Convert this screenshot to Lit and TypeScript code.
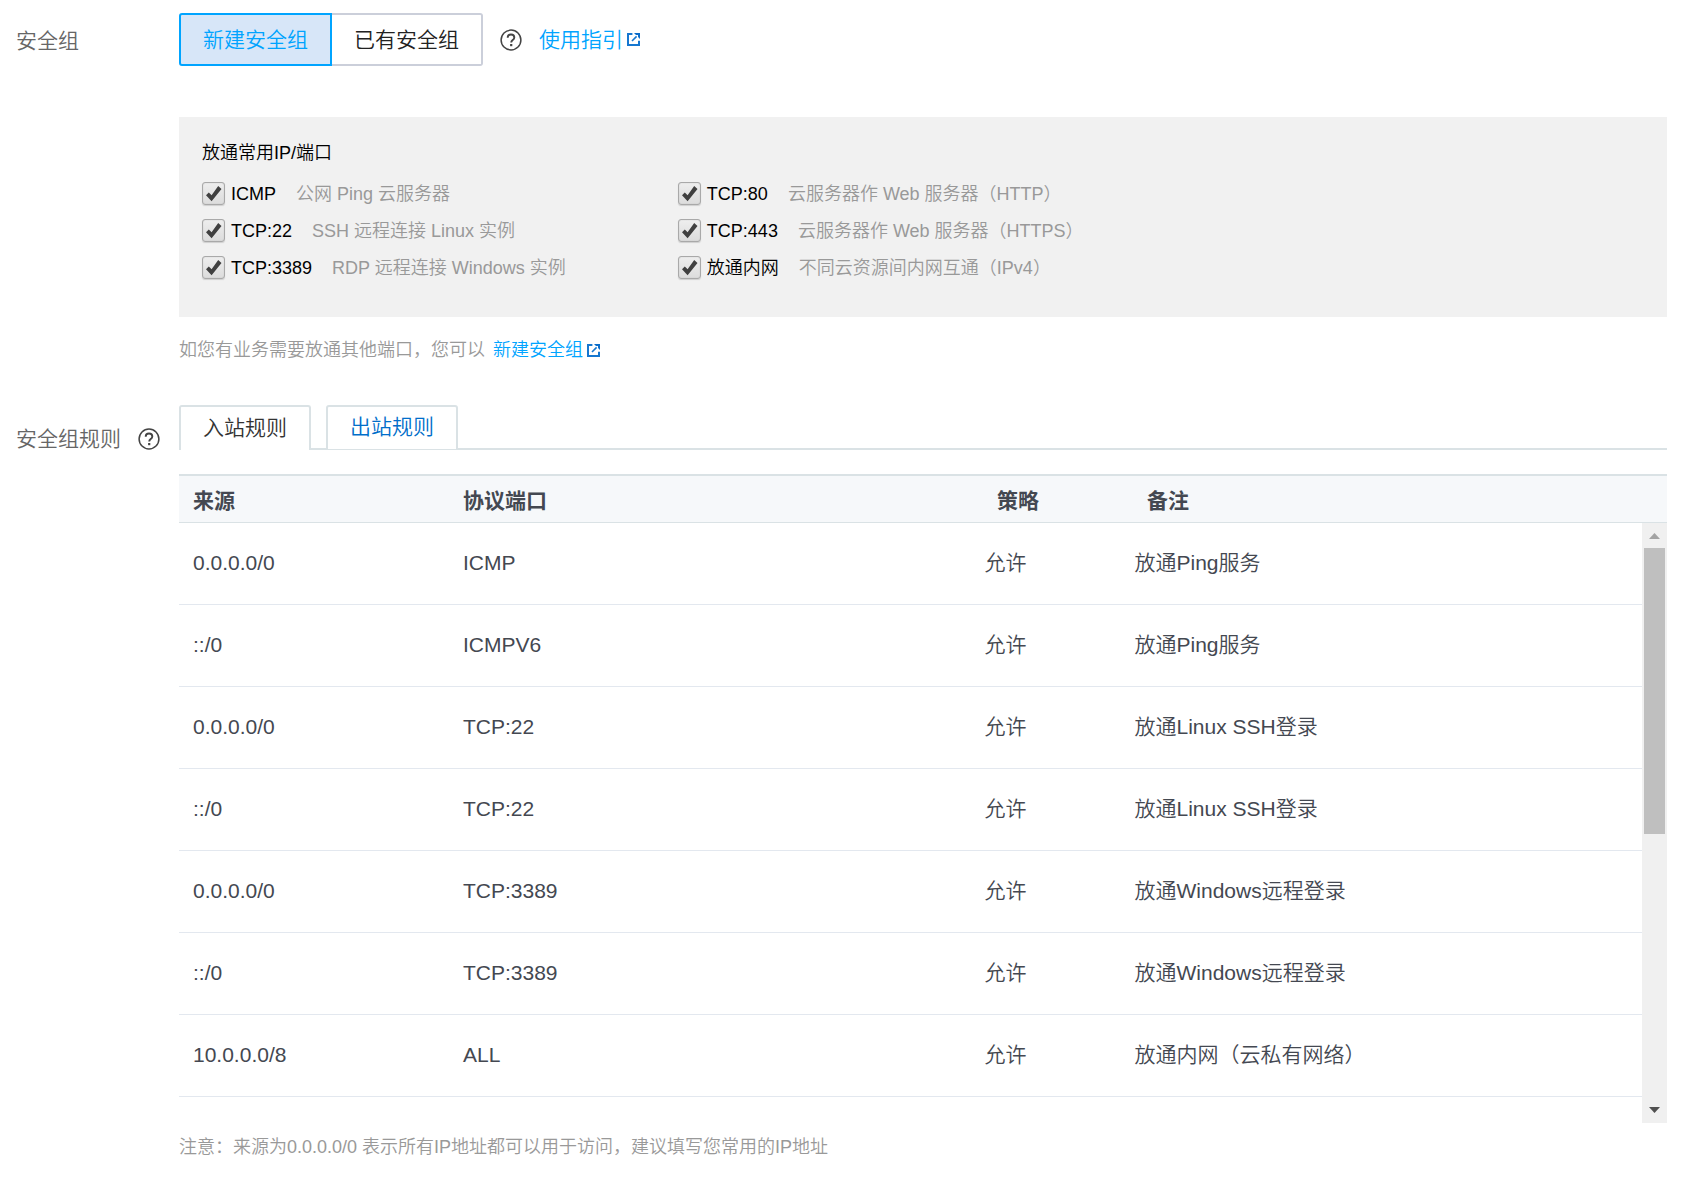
import { LitElement, html, css, svg } from "lit";
import { customElement, state } from "lit/decorators.js";
import { classMap } from "lit/directives/class-map.js";

interface PortOption {
  id: string;
  name: string;
  note: string;
}

interface Rule {
  source: string;
  port: string;
  policy: string;
  remark: string;
}

const PORTS: PortOption[] = [
  { id: "icmp", name: "ICMP", note: "公网 Ping 云服务器" },
  { id: "tcp80", name: "TCP:80", note: "云服务器作 Web 服务器（HTTP）" },
  { id: "tcp22", name: "TCP:22", note: "SSH 远程连接 Linux 实例" },
  { id: "tcp443", name: "TCP:443", note: "云服务器作 Web 服务器（HTTPS）" },
  { id: "tcp3389", name: "TCP:3389", note: "RDP 远程连接 Windows 实例" },
  { id: "intranet", name: "放通内网", note: "不同云资源间内网互通（IPv4）" },
];

const RULES: Rule[] = [
  { source: "0.0.0.0/0", port: "ICMP", policy: "允许", remark: "放通Ping服务" },
  { source: "::/0", port: "ICMPV6", policy: "允许", remark: "放通Ping服务" },
  { source: "0.0.0.0/0", port: "TCP:22", policy: "允许", remark: "放通Linux SSH登录" },
  { source: "::/0", port: "TCP:22", policy: "允许", remark: "放通Linux SSH登录" },
  { source: "0.0.0.0/0", port: "TCP:3389", policy: "允许", remark: "放通Windows远程登录" },
  { source: "::/0", port: "TCP:3389", policy: "允许", remark: "放通Windows远程登录" },
  { source: "10.0.0.0/8", port: "ALL", policy: "允许", remark: "放通内网（云私有网络）" },
];

const MODES = ["新建安全组", "已有安全组"];
const TABS = ["入站规则", "出站规则"];

const helpIcon = html`<svg class="help" viewBox="0 0 22 22" aria-hidden="true">
  ${svg`<circle cx="11" cy="11" r="9.9" fill="none" stroke="#444" stroke-width="1.5"/>
  <path d="M7.7 8.7C7.7 6.6 9.1 5.5 11 5.5s3.3 1.1 3.3 2.9c0 1.3-.7 2-1.6 2.7-.9.7-1.5 1.2-1.5 2.5" fill="none" stroke="#444" stroke-width="1.9"/>
  <rect x="10.1" y="15" width="2.2" height="2.2" fill="#444"/>`}
</svg>`;

const externalIcon = html`<svg class="external" viewBox="0 0 13 13" aria-hidden="true">
  ${svg`<path d="M5.4 1H1v11h11V7.8" fill="none" stroke="#1577d0" stroke-width="2"/>
  <path d="M5 8 9.6 3.4" fill="none" stroke="#1577d0" stroke-width="1.6"/>
  <path d="M7 0H13V6L11 4V2H9z" fill="#0a6cca"/>`}
</svg>`;

@customElement("app-root")
export class AppRoot extends LitElement {
  @state() private mode = 0;
  @state() private tab = 0;

  static styles = css`
    :host {
      display: block;
      padding: 13px 25px 19px 16px;
      background: #fff;
      color: #444;
      font-family: "Liberation Sans", "Noto Sans CJK SC", sans-serif;
      font-weight: 350;
      font-size: 21px;
      line-height: 28px;
    }
    *, *::before, *::after { box-sizing: border-box; }
    button { font: inherit; cursor: pointer; }
    a { color: #00a4ff; text-decoration: none; }

    .field {
      display: grid;
      grid-template-columns: 163px minmax(0, 1fr);
    }
    .field + .field { margin-top: 43px; }
    .caption {
      display: flex;
      align-items: center;
      justify-content: space-between;
      align-self: start;
      padding-right: 19px;
      color: #666;
    }
    .caption.first { margin-top: 14px; }
    .caption.second { margin-top: 20px; }
    .help { width: 22px; height: 22px; display: block; flex: none; }
    .external { width: 13px; height: 13px; flex: none; margin-left: 4px; }
    .link { display: inline-flex; align-items: center; }

    .toolbar { display: flex; align-items: center; gap: 17px; }
    .segments { display: flex; }
    .segment {
      height: 53px;
      padding: 0 22px;
      border: 2px solid #cbcfda;
      border-left: 0;
      border-radius: 0 3px 3px 0;
      background: #fff;
      color: #222;
    }
    .segment:first-child { border-left: 2px solid #cbcfda; border-radius: 3px 0 0 3px; }
    .segment.active,
    .segment.active:first-child { border: 2px solid #00a4ff; background: #d7e6f8; color: #00a4ff; }

    .panel {
      margin: 51px 0 0;
      padding: 24px 23px 31px;
      background: #f1f1f1;
      color: #000;
      font-size: 18px;
      line-height: 24px;
    }
    .panel-title { margin: 0; font-size: 18px; font-weight: 350; }
    .ports {
      display: grid;
      grid-template-columns: 33% 1fr;
      grid-auto-rows: 37px;
      margin-top: 10px;
    }
    .port { display: flex; align-items: center; }
    .port-note { margin-left: 20px; color: #999; }
    .tick { display: grid; width: 23px; height: 23px; margin-right: 6px; }
    .box {
      grid-area: 1 / 1;
      appearance: none;
      width: 23px;
      height: 23px;
      margin: 0;
      border: 1px solid #a9a9a9;
      border-radius: 3px;
      background: linear-gradient(#eeeeee, #dcdcdc);
      box-shadow: 0 1px 1px #cfcfcf, inset 0 0 1px #a9a9a9;
    }
    .mark { grid-area: 1 / 1; width: 23px; height: 23px; pointer-events: none; visibility: hidden; }
    .box:checked + .mark { visibility: visible; }

    .hint {
      display: flex;
      gap: 8px;
      margin: 21px 0 0;
      font-size: 18px;
      line-height: 24px;
      color: #999;
    }

    .tabs { display: flex; height: 45px; }
    .tab {
      padding: 0 22px 2px;
      border: 2px solid #dae2e5;
      border-bottom: 1px solid #dae2e5;
      border-radius: 3px 3px 0 0;
      background: #fff;
      color: #006eca;
    }
    .tab.active { border-bottom: 0; color: #333; }
    .spacer { width: 15px; border-bottom: 2px solid #dae2e5; }
    .filler { flex: 1; border-bottom: 2px solid #dae2e5; }

    .head, .rows { width: 100%; table-layout: fixed; border-collapse: separate; border-spacing: 0; }
    .head { margin-top: 24px; background: #f6f8fa; }
    .head th {
      height: 49px;
      padding: 3px 14px 0;
      border-top: 2px solid #dae2e5;
      border-bottom: 1px solid #dae2e5;
      text-align: left;
      font-weight: 700;
      color: #444851;
    }
    .col-source { width: 270px; }
    .col-policy { width: 150px; }
    .viewport { display: grid; grid-template-columns: minmax(0, 1fr) 25px; }
    .scroll { padding-bottom: 26px; }
    .rows td {
      height: 82px;
      padding: 0 14px 2px;
      border-bottom: 1px solid #e3e8ef;
      color: #444851;
    }
    .bar {
      display: grid;
      grid-template-rows: 25px minmax(0, 1fr) 25px;
      background: #f0f0f0;
    }
    .thumb { height: 52%; margin: 0 2px; background: #bfbfbf; }
    .arrow { width: 25px; height: 25px; display: block; }
    .notice { margin: 12px 0 0; font-size: 18px; line-height: 24px; color: #999; }
  `;

  private renderPort(port: PortOption) {
    return html`<label class="port" for=${port.id}>
      <span class="tick">
        <input class="box" type="checkbox" id=${port.id} checked />
        <svg class="mark" viewBox="0 0 23 23" aria-hidden="true">
          <path d="M4 13.2 6.8 10.4 9.6 13.2 16.2 4 19.5 7.1 9.6 19.2Z" fill="#404040" />
        </svg>
      </span>
      <span>${port.name}</span><span class="port-note">${port.note}</span>
    </label>`;
  }

  private renderTab(name: string, index: number) {
    return html`<button
        class=${classMap({ tab: true, active: this.tab === index })}
        type="button"
        role="tab"
        aria-selected=${this.tab === index ? "true" : "false"}
        @click=${() => (this.tab = index)}
      >${name}</button>${index < TABS.length - 1 ? html`<span class="spacer"></span>` : ""}`;
  }

  private renderColumns() {
    return html`<colgroup>
      <col class="col-source" /><col /><col class="col-policy" /><col />
    </colgroup>`;
  }

  render() {
    return html`
      <section class="field">
        <div class="caption first"><span>安全组</span></div>
        <div>
          <div class="toolbar">
            <div class="segments">
              ${MODES.map(
                (name, index) => html`<button
                  class=${classMap({ segment: true, active: this.mode === index })}
                  type="button"
                  aria-pressed=${this.mode === index ? "true" : "false"}
                  @click=${() => (this.mode = index)}
                >${name}</button>`
              )}
            </div>
            ${helpIcon}
            <a class="link" href="#guide">使用指引${externalIcon}</a>
          </div>
          <div class="panel">
            <h2 class="panel-title">放通常用IP/端口</h2>
            <div class="ports">${PORTS.map((port) => this.renderPort(port))}</div>
          </div>
          <p class="hint">
            <span>如您有业务需要放通其他端口，您可以</span>
            <a class="link" href="#create">新建安全组${externalIcon}</a>
          </p>
        </div>
      </section>
      <section class="field">
        <div class="caption second"><span>安全组规则</span>${helpIcon}</div>
        <div>
          <div class="tabs" role="tablist">
            ${TABS.map((name, index) => this.renderTab(name, index))}
            <span class="filler"></span>
          </div>
          <table class="head">
            ${this.renderColumns()}
            <thead>
              <tr>
                <th scope="col">来源</th>
                <th scope="col">协议端口</th>
                <th scope="col">策略</th>
                <th scope="col">备注</th>
              </tr>
            </thead>
          </table>
          <div class="viewport">
            <div class="scroll">
              <table class="rows">
                ${this.renderColumns()}
                <tbody>
                  ${RULES.map(
                    (rule) => html`<tr>
                      <td>${rule.source}</td>
                      <td>${rule.port}</td>
                      <td>${rule.policy}</td>
                      <td>${rule.remark}</td>
                    </tr>`
                  )}
                </tbody>
              </table>
            </div>
            <div class="bar" aria-hidden="true">
              <svg class="arrow" viewBox="0 0 25 25"><path d="M7 16 12.5 10 18 16Z" fill="#a3a3a3" /></svg>
              <div class="thumb"></div>
              <svg class="arrow" viewBox="0 0 25 25"><path d="M7 9 12.5 15 18 9Z" fill="#505050" /></svg>
            </div>
          </div>
          <p class="notice">注意：来源为0.0.0.0/0 表示所有IP地址都可以用于访问，建议填写您常用的IP地址</p>
        </div>
      </section>
    `;
  }
}
